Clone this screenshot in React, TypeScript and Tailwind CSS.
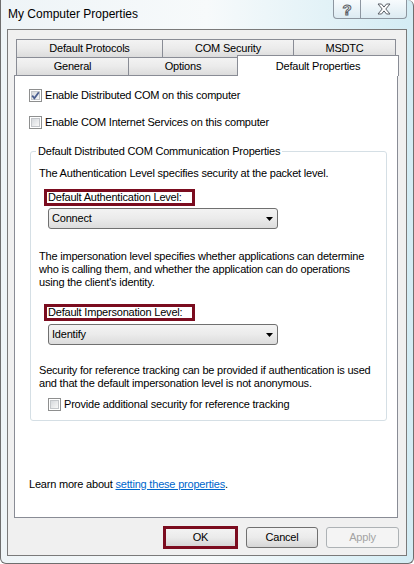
import React from "react";

function CheckBox({ checked }: { checked?: boolean }) {
  return (
    <div className="relative w-[13px] h-[13px] shrink-0 border border-[#8e8f8f] bg-white p-px">
      <div className="w-full h-full border border-[#c3c6ca] bg-gradient-to-br from-[#d6d9dd] to-[#f8f8f8]" />
      {checked && (
        <svg className="absolute left-0 top-0" width="11" height="11" viewBox="0 0 11 11">
          <path d="M2.2 5.6 L4.4 8.3 L8.8 2.2" fill="none" stroke="#4b5f90" strokeWidth="1.8" />
        </svg>
      )}
    </div>
  );
}

function Select({ value }: { value: string }) {
  return (
    <div className="flex items-center justify-between w-[230px] h-[21px] border border-[#707070] rounded-[3px] bg-gradient-to-b from-[#f3f3f3] via-[#ebebeb] to-[#dcdcdc] pl-[3px] pr-[4px]">
      <span>{value}</span>
      <svg width="7" height="4" viewBox="0 0 7 4">
        <path d="M0 0H7L3.5 4Z" fill="#000" />
      </svg>
    </div>
  );
}

function Tab({ label, w, first, selected }: { label: string; w: string; first?: boolean; selected?: boolean }) {
  if (selected) {
    return (
      <div className={`${w} -ml-px -mt-[2px] h-[21px] relative z-10 flex items-center justify-center border border-b-0 border-[#898c95] bg-white`}>
        {label}
      </div>
    );
  }
  return (
    <div
      className={`${w} ${first ? "" : "-ml-px"} h-[18px] flex items-center justify-center border border-b-0 border-[#898c95] bg-gradient-to-b from-[#f3f3f3] via-[#ebebeb] to-[#dcdcdc]`}
    >
      {label}
    </div>
  );
}

function RedLabel({ text, w }: { text: string; w: string }) {
  return (
    <div className={`${w} h-[17px] ml-[5px] border-[3px] border-[#7b0c1f] flex items-center pl-px leading-none`}>
      {text}
    </div>
  );
}

export default function App() {
  return (
    <div className="w-[414px] h-[564px] flex flex-col border-x border-b border-[#6e6e6e] rounded-b-[6px] rounded-tr-[6px] bg-gradient-to-r from-[#eef4f7] via-[#f7fafb] to-[#d3ecf4] font-['Liberation_Sans',Arial,sans-serif] text-[11px] leading-[13px] tracking-[-0.2px] text-black overflow-hidden">
      {/* title bar */}
      <div className="h-[29px] flex justify-between items-start pl-[7px] pr-[6px]">
        <div className="h-[29px] flex items-center text-[12px] tracking-normal">My Computer Properties</div>
        <div className="flex">
          <div className="w-[28px] h-[19px] flex items-center justify-center border border-t-0 border-[#8d96a0] rounded-bl-[4px] bg-gradient-to-b from-[#f7fbfd] to-[#dcebf2] text-white font-bold text-[15px] leading-none [-webkit-text-stroke:1px_#5a5f66]">
            ?
          </div>
          <div className="w-[47px] h-[19px] -ml-px flex items-center justify-center border border-t-0 border-[#8d96a0] rounded-br-[4px] bg-gradient-to-b from-[#f7fbfd] to-[#dcebf2]">
            <svg width="14" height="12" viewBox="0 0 14 12">
              <path
                d="M1 1H4.5L7 4.1L9.5 1H13L8.8 6L13 11H9.5L7 7.9L4.5 11H1L5.2 6Z"
                fill="#fff"
                stroke="#5a5f66"
                strokeWidth="1"
              />
            </svg>
          </div>
        </div>
      </div>

      {/* client area */}
      <div className="mx-[6px] h-[527px] flex flex-col border border-[#7a7a7a] bg-[#f0f0f0] pt-[9px] pl-[6px]">
        <div className="flex ml-[2px]">
          <Tab label="Default Protocols" w="w-[147px]" first />
          <Tab label="COM Security" w="w-[132px]" />
          <Tab label="MSDTC" w="w-[103px]" />
        </div>
        <div className="flex ml-[2px] h-[18px]">
          <Tab label="General" w="w-[113px]" first />
          <Tab label="Options" w="w-[110px]" />
          <Tab label="Default Properties" w="w-[162px]" selected />
        </div>

        {/* panel */}
        <div className="w-[384px] h-[443px] flex flex-col border border-[#898c95] bg-white pt-[13px] pl-[14px] pb-[26px]">
          <div className="flex items-center gap-[3px] h-[13px]">
            <CheckBox checked />
            <span>Enable Distributed COM on this computer</span>
          </div>
          <div className="flex items-center gap-[3px] h-[13px] mt-[14px]">
            <CheckBox />
            <span>Enable COM Internet Services on this computer</span>
          </div>

          <fieldset className="w-[357px] ml-px mt-[16px] border border-[#d5dfe5] rounded-[3px] pl-[8px] pt-[9px] pb-[9px]">
            <legend className="-ml-[3px] px-[2px]">Default Distributed COM Communication Properties</legend>
            <p className="whitespace-nowrap">The Authentication Level specifies security at the packet level.</p>
            <div className="mt-[9px]">
              <RedLabel text="Default Authentication Level:" w="w-[151px]" />
            </div>
            <div className="mt-[2px] ml-[9px]">
              <Select value="Connect" />
            </div>
            <p className="mt-[21px] whitespace-nowrap">
              The impersonation level specifies whether applications can determine
              <br />
              who is calling them, and whether the application can do operations
              <br />
              using the client's identity.
            </p>
            <div className="mt-[15px]">
              <RedLabel text="Default Impersonation Level:" w="w-[151px]" />
            </div>
            <div className="mt-[3px] ml-[9px]">
              <Select value="Identify" />
            </div>
            <p className="mt-[19px] whitespace-nowrap">
              Security for reference tracking can be provided if authentication is used
              <br />
              and that the default impersonation level is not anonymous.
            </p>
            <div className="flex items-center gap-[3px] h-[13px] mt-[8px] ml-[9px]">
              <CheckBox />
              <span>Provide additional security for reference tracking</span>
            </div>
          </fieldset>

          <p className="mt-auto">
            Learn more about <span className="text-[#0066cc] underline">setting these properties</span>.
          </p>
        </div>

        {/* buttons */}
        <div className="flex justify-end items-center gap-[8px] pr-[7px] mt-[8px] h-[23px]">
          <div className="w-[75px] h-[23px] flex items-center justify-center border-[3px] border-[#7b0c1f] bg-gradient-to-b from-[#f3f3f3] via-[#ebebeb] to-[#d6d6d6]">
            OK
          </div>
          <div className="w-[72px] h-[21px] flex items-center justify-center border border-[#707070] rounded-[3px] bg-gradient-to-b from-[#f3f3f3] via-[#ebebeb] to-[#d6d6d6]">
            Cancel
          </div>
          <div className="w-[73px] h-[21px] flex items-center justify-center border border-[#adb2b5] rounded-[3px] bg-[#f4f4f4] text-[#a3a3a3]">
            Apply
          </div>
        </div>
      </div>
    </div>
  );
}
